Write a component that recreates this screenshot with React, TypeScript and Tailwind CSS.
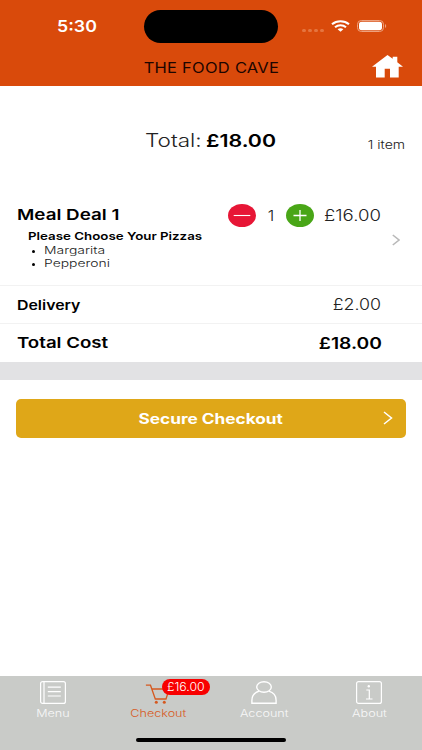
import type { ReactNode } from "react";

type TextProps = { className?: string; children: ReactNode };

// Wide-set label: the scale only affects painting, so callers pick the origin
function Text({ className = "", children }: TextProps) {
  return <span className={`inline-block whitespace-nowrap leading-none ${className}`}>{children}</span>;
}

function StatusBar() {
  return (
    <div className="flex h-[52px] items-center">
      <div className="flex w-[144px] pl-[57px]">
        <Text className="origin-left scale-x-[1.11] text-[16px] font-semibold text-white">5:30</Text>
      </div>
      <div className="h-[33px] w-[134px] rounded-full bg-black" />
      <div className="flex flex-1 items-center pl-[24px]">
        <div className="mt-[8px] flex gap-[2px]">
          {[0, 1, 2, 3].map((i) => (
            <span key={i} className="h-[3px] w-[4px] rounded-full bg-[#e57540]" />
          ))}
        </div>
        <svg className="ml-[7px]" width="19" height="12" viewBox="0 0 19 12" fill="none" stroke="#fff" strokeWidth="2.1">
          <path d="M1 4.3C5.8.2 13.2.2 18 4.3" />
          <path d="M4 7.2c3.2-2.7 7.8-2.7 11 0" />
          <path d="M6.6 9.2c1.7-1.4 4.1-1.4 5.8 0L9.5 11.7z" fill="#fff" stroke="none" />
        </svg>
        <svg className="ml-[7px]" width="30" height="12" viewBox="0 0 30 12" fill="none">
          <rect x=".5" y=".5" width="26" height="11" rx="3.8" stroke="#eea17e" />
          <rect x="2" y="1.8" width="23" height="8.4" rx="2.6" fill="#fff" />
          <path d="M28 4c1.6.5 1.6 3.5 0 4z" fill="#eea17e" />
        </svg>
      </div>
    </div>
  );
}

function Header() {
  return (
    <header className="h-[86px] bg-[#d94a0b]">
      <StatusBar />
      <div className="grid h-[30px] grid-cols-[1fr_auto_1fr] items-center">
        <span />
        <Text className="mt-px scale-x-[1.18] text-[14px] tracking-[0.2px] text-[#1c0500]">THE FOOD CAVE</Text>
        <svg className="-mt-px mr-[19px] justify-self-end" width="31" height="23" viewBox="0 0 31 23" fill="#fff">
          <path d="M15.5 0 20.7 3.8V1.8h4.6v5.4L31 11.8h-4.3V22.4H18v-8.7h-5.3v8.7H4V11.8H0z" />
        </svg>
      </div>
    </header>
  );
}

function Summary() {
  return (
    <div className="grid h-[110px] grid-cols-[145px_1fr_auto] items-center">
      <span />
      <div className="flex items-center">
        <div className="w-[61px]">
          <Text className="origin-left scale-x-[1.25] text-[18px] font-light text-[#222]">Total:</Text>
        </div>
        <Text className="origin-left scale-x-[1.2] text-[17.8px] font-semibold">£18.00</Text>
      </div>
      <Text className="mr-[17px] mt-[9px] origin-right scale-x-[1.28] text-[11px] font-light text-[#222]">1 item</Text>
    </div>
  );
}

function MealItem() {
  return (
    <div className="flex h-[89px] pl-[16.5px] pr-[22px] pt-[7px]">
      <div className="w-[211.5px]">
        <div className="flex h-[24px] items-center">
          <Text className="mt-px origin-left scale-x-[1.27] text-[14.8px] font-semibold">Meal Deal 1</Text>
        </div>
        <div className="pl-[11px]">
          <div className="flex h-[18.5px] items-center">
            <Text className="origin-left scale-x-[1.21] text-[11px] font-semibold">Please Choose Your Pizzas</Text>
          </div>
          {["Margarita", "Pepperoni"].map((name) => (
            <div key={name} className="flex h-[12.5px] items-center">
              <span className="ml-[4px] mr-[9px] h-[3px] w-[3px] rounded-full bg-black" />
              <Text className="origin-left scale-x-[1.3] text-[10.7px] font-light text-[#222]">{name}</Text>
            </div>
          ))}
        </div>
      </div>
      <div className="flex flex-1 flex-col">
        <div className="flex h-[24px] items-center">
          <svg width="28" height="23" viewBox="0 0 28 23">
            <ellipse cx="14" cy="11.5" rx="14" ry="11.5" fill="#e71636" />
            <path d="M5.7 11.5h16.6" stroke="#fff" strokeWidth="1.1" />
          </svg>
          <div className="w-[30px] pb-px text-center">
            <Text className="scale-x-[1.1] text-[15px] font-light text-[#222]">1</Text>
          </div>
          <svg width="28" height="23" viewBox="0 0 28 23">
            <ellipse cx="14" cy="11.5" rx="14" ry="11.5" fill="#49a617" />
            <path d="M7.5 11.5h13M14 6v11" stroke="#fff" strokeWidth="1.3" />
          </svg>
          <Text className="ml-[9.5px] mt-px origin-left scale-x-[1.2] text-[15.5px] font-light text-[#222]">£16.00</Text>
        </div>
        <svg className="mt-[7px] self-end" width="8" height="12" viewBox="0 0 8 12" fill="none">
          <path d="m.8 1 6.2 5-6.2 5" stroke="#b9b9b9" strokeWidth="1.6" />
        </svg>
      </div>
    </div>
  );
}

function TabBar() {
  return (
    <nav className="h-[74px] bg-[#c9cbc8]">
      <div className="grid h-[62px] grid-cols-4 text-[10.5px] font-light text-[#f8f8f8]">
        <div className="flex flex-col items-center pt-[5px]">
          <svg width="26" height="23" viewBox="0 0 26 23" fill="none" stroke="#fff" strokeWidth="1.2">
            <rect x=".6" y=".6" width="24.8" height="21.8" rx="2" />
            <path d="M4 .6v21.8M7.8 6.2h13M7.8 10.6h13M7.8 15h13" />
          </svg>
          <Text className="mt-[5px] scale-x-[1.2]">Menu</Text>
        </div>
        <div className="relative flex flex-col items-center pt-[8px] text-[#d75a24]">
          <svg width="26" height="20" viewBox="0 0 26 20" fill="none" stroke="#d5591f" strokeWidth="1.3">
            <path d="M.9 1.2h4.6l4.8 13.8h10.7l3.2-10H6.8" />
            <circle cx="11.3" cy="18.2" r="1.5" fill="#d5591f" stroke="none" />
            <circle cx="19.3" cy="18.2" r="1.5" fill="#d5591f" stroke="none" />
          </svg>
          <Text className="mt-[5px] scale-x-[1.2]">Checkout</Text>
          <div className="absolute left-[56px] top-[3px] flex h-[16px] w-[48px] items-center justify-center rounded-full bg-[#f80000] text-[11px] text-white">
            <Text className="scale-x-[1.12]">£16.00</Text>
          </div>
        </div>
        <div className="flex flex-col items-center pt-[5px]">
          <svg width="26" height="23" viewBox="0 0 26 23" fill="none" stroke="#fff" strokeWidth="1.4">
            <ellipse cx="13" cy="6" rx="7.3" ry="5.3" />
            <path d="M8.2 10.2C3.4 11.6.9 14.6.9 19.2v3h24.2v-3c0-4.6-2.5-7.6-7.3-9" />
          </svg>
          <Text className="mt-[5px] scale-x-[1.2]">Account</Text>
        </div>
        <div className="flex flex-col items-center pt-[5px]">
          <svg width="26" height="23" viewBox="0 0 26 23" fill="none" stroke="#fff" strokeWidth="1.2">
            <rect x=".6" y=".6" width="24.8" height="21.8" rx="2" />
            <path d="M10.3 9h3v9M10 18h6.5" />
            <circle cx="12.8" cy="5.2" r="1.2" fill="#fff" stroke="none" />
          </svg>
          <Text className="mt-[5px] scale-x-[1.2]">About</Text>
        </div>
      </div>
      <div className="mx-auto h-[4px] w-[150px] rounded-full bg-black" />
    </nav>
  );
}

export default function App() {
  return (
    <div className="flex h-[750px] w-[422px] flex-col overflow-hidden bg-white font-['Inter','Liberation_Sans',sans-serif] text-black">
      <Header />
      <main className="flex-1">
        <Summary />
        <MealItem />
        <div className="flex h-[38px] items-center justify-between border-t border-[#f2f2f2] pl-[16.5px] pr-[41px]">
          <Text className="mt-px origin-left scale-x-[1.22] text-[13px] font-semibold">Delivery</Text>
          <Text className="origin-right scale-x-[1.15] text-[15.5px] font-light text-[#222]">£2.00</Text>
        </div>
        <div className="flex h-[39px] items-center justify-between border-t border-[#f2f2f2] pl-[16.5px] pr-[40.5px]">
          <Text className="mt-px origin-left scale-x-[1.26] text-[14.8px] font-semibold">Total Cost</Text>
          <Text className="mt-px origin-right scale-x-[1.24] text-[15.5px] font-semibold">£18.00</Text>
        </div>
        <div className="h-[17.5px] bg-[#e2e2e4]" />
        <button className="ml-[16px] mt-[19.5px] grid h-[38.5px] w-[390px] grid-cols-[1fr_auto_1fr] items-center rounded-[5px] bg-[#dfa718] text-white">
          <span />
          <Text className="mt-px scale-x-[1.23] text-[14px] font-bold">Secure Checkout</Text>
          <svg className="mr-[13px] justify-self-end" width="10" height="14" viewBox="0 0 10 14" fill="none">
            <path d="m1 1 7.5 6L1 13" stroke="#fff" strokeWidth="1.5" />
          </svg>
        </button>
      </main>
      <TabBar />
    </div>
  );
}
